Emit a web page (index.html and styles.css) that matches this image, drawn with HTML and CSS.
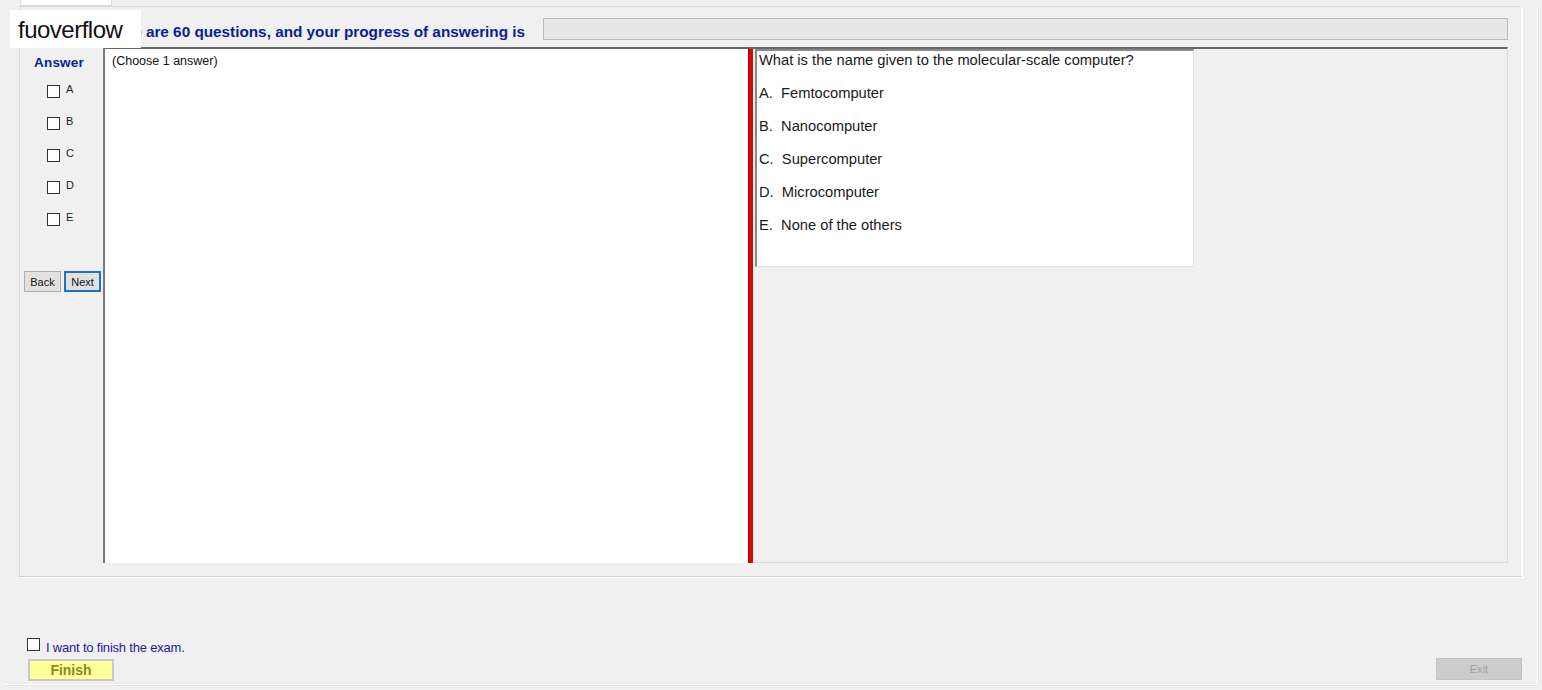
FILE: index.html
```html
<!DOCTYPE html>
<html lang="en">
<head>
    <meta charset="UTF-8">
    <title>Exam</title>
    <link rel="stylesheet" href="styles.css">
</head>
<body>
    <div class="tabs"><div class="tab"></div></div>
    <div class="tab-page">
        <div class="group">
            <div class="header">
                <span class="progress-text">There are 60 questions, and your progress of answering is</span>
                <div class="progress"></div>
            </div>
            <div class="main">
                <div class="answers">
                    <div class="answer-title">Answer</div>
                    <label class="opt"><span class="box"></span>A</label>
                    <label class="opt"><span class="box"></span>B</label>
                    <label class="opt"><span class="box"></span>C</label>
                    <label class="opt"><span class="box"></span>D</label>
                    <label class="opt"><span class="box"></span>E</label>
                    <div class="nav">
                        <button class="btn">Back</button>
                        <button class="btn btn-focus">Next</button>
                    </div>
                </div>
                <div class="left-pane">(Choose 1 answer)</div>
                <div class="splitter"></div>
                <div class="right-pane">
                    <div class="question">
                        <p>What is the name given to the molecular-scale computer?</p>
                        <p>A.&nbsp; Femtocomputer</p>
                        <p>B.&nbsp; Nanocomputer</p>
                        <p>C.&nbsp; Supercomputer</p>
                        <p>D.&nbsp; Microcomputer</p>
                        <p>E.&nbsp; None of the others</p>
                    </div>
                </div>
            </div>
        </div>
        <div class="footer">
            <div class="finish-col">
                <label class="finish-check"><span class="box"></span>I want to finish the exam.</label>
                <button class="finish-btn">Finish</button>
            </div>
            <button class="exit-btn">Exit</button>
        </div>
    </div>
    <div class="watermark">fuoverflow</div>
</body>
</html>
```

FILE: styles.css
```css
body {
    margin: 0;
    background-color: #f0f0f0;
    font-family: "Liberation Sans", Arial, sans-serif;
    color: #000;
    width: 1542px;
    height: 690px;
    overflow: hidden;
}

.tabs {
    height: 6px;
    padding-left: 20px;
}

.tab {
    width: 90px;
    height: 5px;
    background: #fff;
    border: 1px solid #d9d9d9;
    border-top: none;
}

.tab-page {
    margin: 0 4px 0 3px;
    height: 678px;
    border-right: 1px solid #fff;
    border-bottom: 1px solid #fff;
    box-shadow: 1px 1px 0 #e4e4e4;
    padding: 0 15px 0 16px;
    display: flex;
    flex-direction: column;
}

.group {
    height: 569px;
    border: 1px solid #dcdcdc;
    border-right-color: #fff;
    border-bottom-color: #cfcfcf;
    box-shadow: 1px 1px 0 #fff;
    padding: 0 13px 0 0;
    display: flex;
    flex-direction: column;
}

.header {
    height: 40px;
    display: flex;
    align-items: flex-start;
    padding-top: 11px;
    box-sizing: border-box;
}

.progress-text {
    margin-left: 80px;
    margin-top: 5px;
    font-size: 15.3px;
    font-weight: bold;
    color: #0c1c9a;
    white-space: nowrap;
}

.progress {
    margin-left: 18px;
    flex: 1;
    height: 20px;
    background: #e6e6e6;
    border: 1px solid #bcbcbc;
}

.main {
    height: 516px;
    display: flex;
}

.answers {
    width: 83px;
    display: flex;
    flex-direction: column;
    align-items: flex-start;
}

.answer-title {
    margin-top: 8px;
    margin-left: 14px;
    font-size: 13.5px;
    font-weight: bold;
    color: #0c1c9a;
    height: 18px;
    letter-spacing: 0.2px;
}

.opt {
    display: flex;
    align-items: center;
    height: 32px;
    font-size: 11px;
    color: #222;
    margin-left: 27px;
}

.opt:first-of-type {
    margin-top: 0;
}

.box {
    width: 11px;
    height: 11px;
    border: 1px solid #333;
    background: #fff;
    margin-right: 6px;
}

.opt .box {
    margin-top: 5px;
}

.nav {
    margin-top: 38px;
    display: flex;
    gap: 3px;
    margin-left: 4px;
}

.btn {
    width: 37px;
    height: 21px;
    padding: 0;
    font-family: "Liberation Sans", Arial, sans-serif;
    font-size: 11px;
    color: #111;
    background: #e1e1e1;
    border: 1px solid #adadad;
}

.btn-focus {
    border: 2px solid #1a73c4;
}

.left-pane {
    width: 636px;
    background: #fff;
    border-left: 2px solid #7a7a7a;
    border-top: 2px solid #6a6a6a;
    padding: 5px 0 0 7px;
    font-size: 12.5px;
    color: #111;
}

.splitter {
    width: 4px;
    background: #d60a0a;
    border-left: 1px solid #a00;
    border-top: 2px solid #6a6a6a;
}

.right-pane {
    flex: 1;
    border-top: 2px solid #6a6a6a;
    border-right: 1px solid #dcdcdc;
    border-bottom: 1px solid #dcdcdc;
    padding-left: 2px;
}

.question {
    width: 434px;
    height: 214px;
    background: #fff;
    border-left: 2px solid #8a8a8a;
    border-top: 2px solid #8a8a8a;
    border-right: 1px solid #e0e0e0;
    border-bottom: 1px solid #e0e0e0;
    padding: 1px 0 0 2px;
    font-size: 14.7px;
    color: #1a1a1a;
}

.question p {
    margin: 0 0 16px 0;
    line-height: 17px;
}

.footer {
    flex: 1;
    display: flex;
    justify-content: space-between;
    align-items: flex-end;
    padding: 0 0 3px 8px;
}

.finish-col {
    display: flex;
    flex-direction: column;
    gap: 4px;
}

.finish-check {
    display: flex;
    align-items: center;
    font-size: 13px;
    color: #1a1aa0;
    letter-spacing: -0.2px;
}

.finish-check .box {
    margin-right: 6px;
    margin-top: -6px;
}

.finish-btn {
    width: 86px;
    height: 22px;
    margin-left: 1px;
    padding: 0;
    background: #ffff9c;
    border: 2px solid #c8c8c8;
    font-family: "Liberation Sans", Arial, sans-serif;
    font-size: 14px;
    font-weight: bold;
    color: #8c8c14;
}

.exit-btn {
    width: 86px;
    height: 22px;
    margin-bottom: 1px;
    padding: 0;
    background: #cccccc;
    border: 1px solid #c2c2c2;
    font-family: "Liberation Sans", Arial, sans-serif;
    font-size: 11px;
    color: #a2a2a2;
}

.watermark {
    position: absolute;
    left: 10px;
    top: 10px;
    width: 131px;
    height: 38px;
    box-sizing: border-box;
    background: #fff;
    padding: 6px 0 0 8px;
    font-size: 24px;
    color: #111;
    letter-spacing: -0.5px;
}
```
